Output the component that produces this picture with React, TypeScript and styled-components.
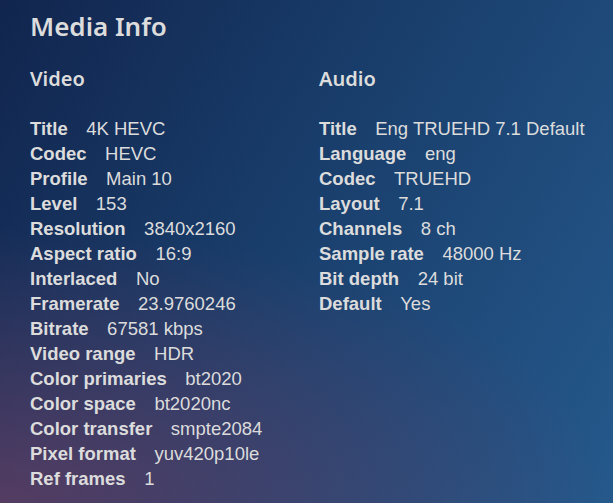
import React from "react";
import styled, { createGlobalStyle } from "styled-components";

const GlobalStyle = createGlobalStyle`
  html, body {
    margin: 0;
    padding: 0;
    height: 100%;
  }
  body {
    font-family: "Liberation Sans", Arial, sans-serif;
    color: #dcdcdc;
  }
  #root {
    height: 100%;
  }
`;

const Page = styled.div`
  box-sizing: border-box;
  width: 100%;
  min-height: 100vh;
  padding: 9px 30px 0;
  background:
    radial-gradient(ellipse 100% 55% at 0% 100%, rgba(105, 62, 98, 0.75) 0%, rgba(105, 62, 98, 0) 100%),
    linear-gradient(120deg, #11254e 0%, #1a406e 50%, #25598c 100%);
  overflow: hidden;
`;

const Title = styled.h1`
  margin: 0;
  font-family: "Noto Sans", "Open Sans", sans-serif;
  font-weight: 600;
  font-size: 26px;
  line-height: 34px;
  color: #dcdcdc;
`;

const Streams = styled.div`
  display: grid;
  grid-template-columns: 289px 1fr;
  margin-top: 24px;
`;

const Stream = styled.section`
  display: flex;
  flex-direction: column;
`;

const StreamHeading = styled.h2`
  margin: 0 0 25px;
  font-family: "Noto Sans", "Open Sans", sans-serif;
  font-weight: 600;
  font-size: 20px;
  line-height: 24px;
  color: #dcdcdc;
`;

const Row = styled.div`
  display: flex;
  align-items: baseline;
  font-size: 18.5px;
  line-height: 25px;
  white-space: nowrap;
`;

const Label = styled.span`
  font-weight: 700;
  margin-right: 1em;
`;

const Value = styled.span`
  font-weight: 400;
`;

type Item = [string, string];

const video: Item[] = [
  ["Title", "4K HEVC"],
  ["Codec", "HEVC"],
  ["Profile", "Main 10"],
  ["Level", "153"],
  ["Resolution", "3840x2160"],
  ["Aspect ratio", "16:9"],
  ["Interlaced", "No"],
  ["Framerate", "23.9760246"],
  ["Bitrate", "67581 kbps"],
  ["Video range", "HDR"],
  ["Color primaries", "bt2020"],
  ["Color space", "bt2020nc"],
  ["Color transfer", "smpte2084"],
  ["Pixel format", "yuv420p10le"],
  ["Ref frames", "1"],
];

const audio: Item[] = [
  ["Title", "Eng TRUEHD 7.1 Default"],
  ["Language", "eng"],
  ["Codec", "TRUEHD"],
  ["Layout", "7.1"],
  ["Channels", "8 ch"],
  ["Sample rate", "48000 Hz"],
  ["Bit depth", "24 bit"],
  ["Default", "Yes"],
];

const StreamBlock = ({ heading, items }: { heading: string; items: Item[] }) => (
  <Stream>
    <StreamHeading>{heading}</StreamHeading>
    {items.map(([k, v]) => (
      <Row key={k}>
        <Label>{k}</Label>
        <Value>{v}</Value>
      </Row>
    ))}
  </Stream>
);

export default function App() {
  return (
    <>
      <GlobalStyle />
      <Page>
        <Title>Media Info</Title>
        <Streams>
          <StreamBlock heading="Video" items={video} />
          <StreamBlock heading="Audio" items={audio} />
        </Streams>
      </Page>
    </>
  );
}
